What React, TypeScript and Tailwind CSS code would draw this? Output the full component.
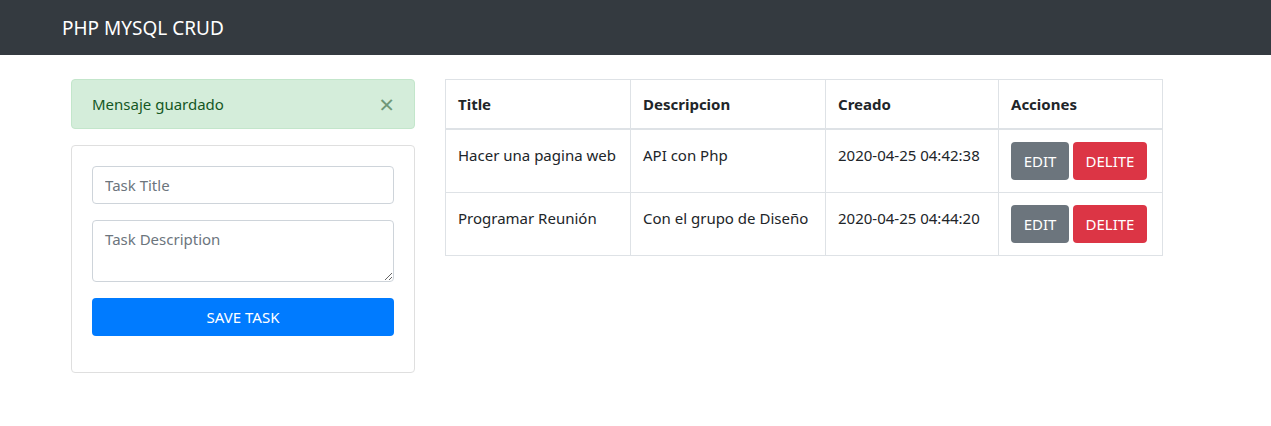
import React from 'react'

const tasks = [
  { title: 'Hacer una pagina web', description: 'API con Php', created: '2020-04-25 04:42:38' },
  { title: 'Programar Reunión', description: 'Con el grupo de Diseño', created: '2020-04-25 04:44:20' },
]

const App = () => {
  return (
    <div className="min-h-screen bg-white text-[#212529] text-[16px] leading-6" style={{ fontFamily: '"Noto Sans", "Open Sans", sans-serif' }}>
      {/* Navbar */}
      <nav className="bg-[#343a40] h-[55px] flex items-center">
        <a href="#" className="ml-[62px] text-white text-[19px] leading-[30px]">
          PHP MYSQL CRUD
        </a>
      </nav>

      <div className="flex gap-[30px] pl-[71px] pt-[24px]">
        {/* Left column */}
        <div className="w-[344px] flex flex-col gap-[16px]">
          <div className="relative h-[50px] bg-[#d4edda] border border-[#c3e6cb] rounded text-[#155724] flex items-center px-5">
            <span className="text-[15px]">Mensaje guardado</span>
            <button className="absolute right-[20px] top-[12px] text-[26px] leading-6 font-normal text-[#6f9877]">
              ×
            </button>
          </div>

          <div className="border border-[#dfdfdf] rounded p-5">
            <form className="flex flex-col">
              <input
                type="text"
                placeholder="Task Title"
                className="h-[38px] w-full border border-[#ced4da] rounded px-3 text-[15px] placeholder-[#6c757d] outline-none"
              />
              <textarea
                rows={2}
                placeholder="Task Description"
                className="mt-[16px] h-[62px] w-full border border-[#ced4da] rounded px-3 py-[6px] text-[15px] placeholder-[#6c757d] outline-none"
              />
              <button
                type="button"
                className="mt-[16px] mb-[16px] h-[38px] w-full bg-[#007bff] text-white rounded text-[15px]"
              >
                SAVE TASK
              </button>
            </form>
          </div>
        </div>

        {/* Table */}
        <div className="w-[718px]">
          <table className="w-full border-collapse border border-[#dee2e6] text-[15px]">
            <thead>
              <tr className="border-b-2 border-[#dee2e6]">
                <th className="w-[185px] h-[49px] px-3 text-left font-bold border-r border-[#dee2e6]">Title</th>
                <th className="w-[195px] px-3 text-left font-bold border-r border-[#dee2e6]">Descripcion</th>
                <th className="w-[173px] px-3 text-left font-bold border-r border-[#dee2e6]">Creado</th>
                <th className="px-3 text-left font-bold">Acciones</th>
              </tr>
            </thead>
            <tbody>
              {tasks.map((task) => (
                <tr key={task.created} className="border-b border-[#dee2e6]">
                  <td className="p-3 pt-[13px] align-top border-r border-[#dee2e6] whitespace-nowrap">{task.title}</td>
                  <td className="p-3 pt-[13px] align-top border-r border-[#dee2e6] whitespace-nowrap">{task.description}</td>
                  <td className="p-3 pt-[13px] align-top border-r border-[#dee2e6] whitespace-nowrap">{task.created}</td>
                  <td className="p-3 align-top">
                    <div className="flex gap-[4px]">
                      <a href="#" className="h-[38px] w-[58px] flex items-center justify-center bg-[#6c757d] text-white rounded">
                        EDIT
                      </a>
                      <a href="#" className="h-[38px] w-[74px] flex items-center justify-center bg-[#dc3545] text-white rounded">
                        DELITE
                      </a>
                    </div>
                  </td>
                </tr>
              ))}
            </tbody>
          </table>
        </div>
      </div>
    </div>
  )
}

export default App
